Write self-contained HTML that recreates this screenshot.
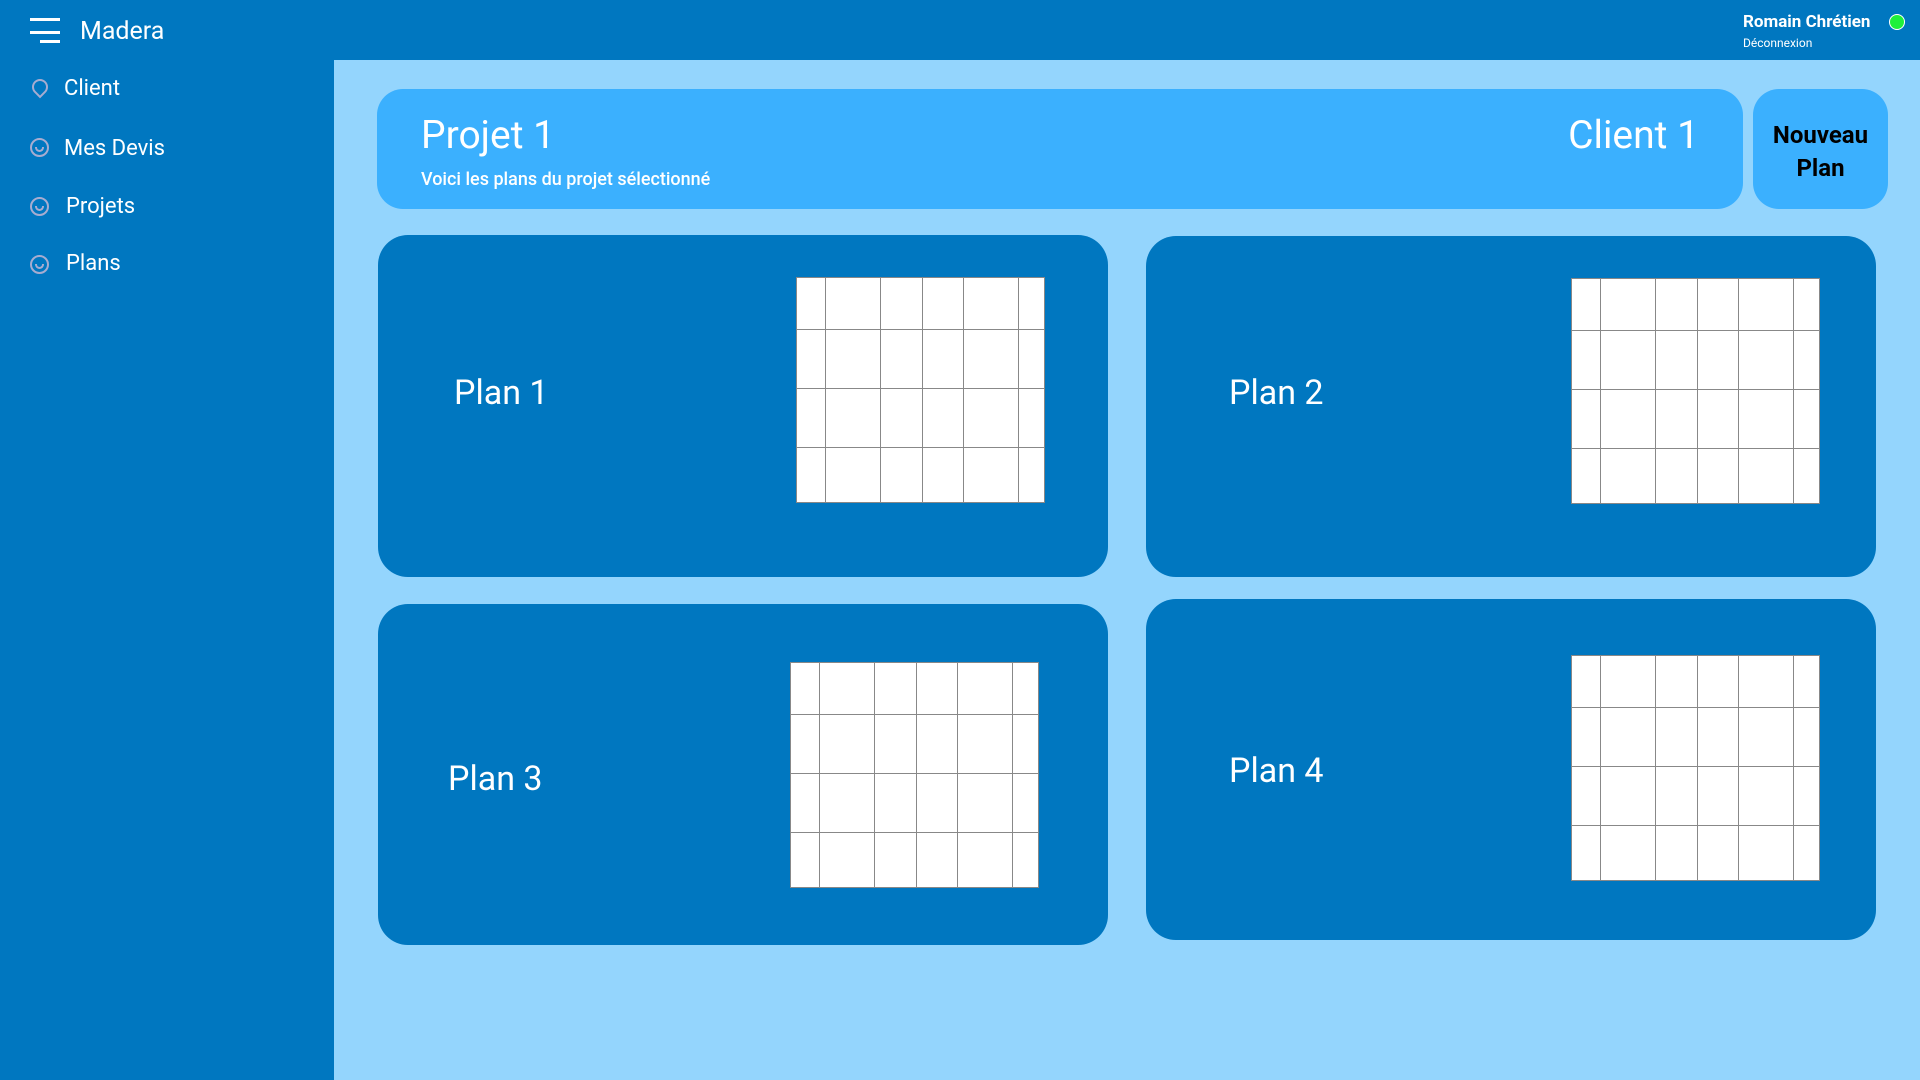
<!DOCTYPE html>
<html><head><meta charset="utf-8"><style>
*{margin:0;padding:0;box-sizing:border-box}
body{width:1920px;height:1080px;background:#94d5fd;font-family:"Roboto","Liberation Sans",sans-serif;position:relative;overflow:hidden;color:#fff}
.hdr{position:absolute;left:0;top:0;width:1920px;height:60px;background:#0077c0}
.side{position:absolute;left:0;top:0;width:334px;height:1080px;background:#0077c0}
.a{position:absolute;white-space:nowrap}
.nav{position:absolute;font-size:22px;line-height:22px}
.ic{position:absolute;left:30px;width:19px;height:19px;border:2px solid #a7acd0;border-radius:50%}
.ic b{position:absolute;left:3px;top:7px;width:9px;height:5px;border:2px solid #a7acd0;border-top:none;border-radius:0 0 6px 6px}
.card{position:absolute;background:#0077c0;border-radius:30px}
.grid{position:absolute;width:249px;height:226px;background:#fff;border:1px solid #888}
.grid i{position:absolute;background:#888}
.pl{position:absolute;font-size:34px;line-height:36px}
</style></head><body>
<div class="side"></div><div class="hdr"></div>
<div class="a" style="left:30px;top:18px;width:30px;height:3px;background:#fff"></div>
<div class="a" style="left:30px;top:31px;width:30px;height:3px;background:#fff"></div>
<div class="a" style="left:40px;top:40px;width:20px;height:3px;background:#fff"></div>
<div class="a" style="left:80px;top:17px;font-size:25px;line-height:30px">Madera</div>
<div class="ic" style="top:79px;border-radius:50% 50% 50% 0;transform:rotate(-45deg);width:16px;height:16px;left:32px"></div>
<div class="nav" style="left:64px;top:78px">Client</div>
<div class="ic" style="top:138px"><b></b></div><div class="nav" style="left:64px;top:138px">Mes Devis</div>
<div class="ic" style="top:197px"><b></b></div><div class="nav" style="left:66px;top:196px">Projets</div>
<div class="ic" style="top:255px"><b></b></div><div class="nav" style="left:66px;top:253px">Plans</div>
<div class="a" style="left:1743px;top:12px;font-size:17px;font-weight:bold">Romain Chrétien</div>
<div class="a" style="left:1743px;top:36px;font-size:12px">Déconnexion</div>
<div class="a" style="left:1889px;top:14px;width:16px;height:16px;border-radius:50%;background:#1ef03a;border:1px solid #fff"></div>

<div class="a" style="left:377px;top:89px;width:1366px;height:120px;background:#3bb0fe;border-radius:26px"></div>
<div class="a" style="left:421px;top:113px;font-size:39px;line-height:44px">Projet 1</div>
<div class="a" style="left:421px;top:169px;font-size:18px;font-weight:500">Voici les plans du projet sélectionné</div>
<div class="a" style="left:1520px;top:113px;width:179px;text-align:right;font-size:39px;line-height:44px">Client 1</div>
<div class="a" style="left:1753px;top:89px;width:135px;height:120px;background:#3bb0fe;border-radius:26px;color:#000;font-weight:bold;font-size:24px;line-height:33px;text-align:center;padding-top:30px">Nouveau<br>Plan</div>

<div class="card" style="left:378px;top:235px;width:730px;height:342px"></div>
<div class="card" style="left:1146px;top:236px;width:730px;height:341px"></div>
<div class="card" style="left:378px;top:604px;width:730px;height:341px"></div>
<div class="card" style="left:1146px;top:599px;width:730px;height:341px"></div>
<div class="pl" style="left:454px;top:375px">Plan 1</div>
<div class="pl" style="left:1229px;top:375px">Plan 2</div>
<div class="pl" style="left:448px;top:761px">Plan 3</div>
<div class="pl" style="left:1229px;top:753px">Plan 4</div>
<div id="g"></div>
<script>
var pos=[[796,277],[1571,278],[790,662],[1571,655]];
var cols=[28,83,125,166,221],rows=[51,110,169],h='';
pos.forEach(function(p){h+='<div class="grid" style="left:'+p[0]+'px;top:'+p[1]+'px">';
cols.forEach(function(c){h+='<i style="left:'+c+'px;top:0;width:1px;height:100%"></i>'});
rows.forEach(function(r){h+='<i style="top:'+r+'px;left:0;height:1px;width:100%"></i>'});
h+='</div>'});
document.getElementById('g').innerHTML=h;
</script>
</body></html>
